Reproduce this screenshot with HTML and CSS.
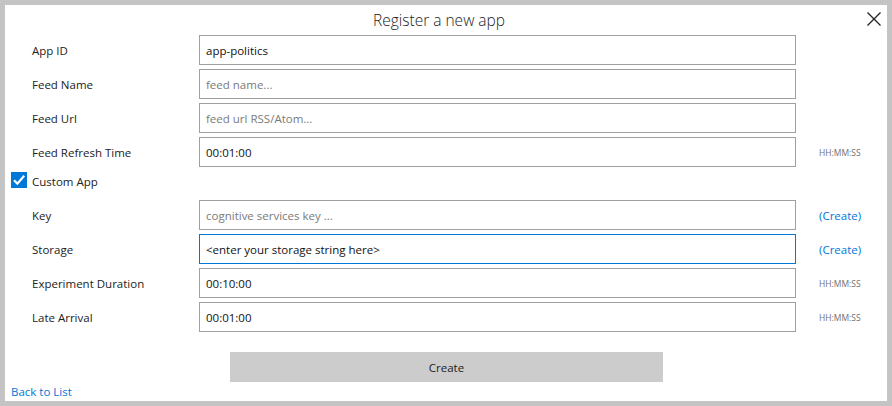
FILE: index.html
```html
<!DOCTYPE html>
<html>
<head>
<meta charset="utf-8">
<link rel="stylesheet" href="styles.css">
</head>
<body>
<div class="panel">
  <div class="title">Register a new app</div>
  <button class="close" aria-label="close">
    <svg width="14" height="14" viewBox="0 0 14 14"><path d="M0.5 0.5 L13.5 13.5 M13.5 0.5 L0.5 13.5" stroke="#222" stroke-width="1.3" fill="none"/></svg>
  </button>
  <div class="form">
    <div class="label">App ID</div>
    <div class="field">app-politics</div>
    <div class="note"></div>

    <div class="label">Feed Name</div>
    <div class="field ph">feed name...</div>
    <div class="note"></div>

    <div class="label">Feed Url</div>
    <div class="field ph">feed url RSS/Atom...</div>
    <div class="note"></div>

    <div class="label">Feed Refresh Time</div>
    <div class="field">00:01:00</div>
    <div class="note small">HH:MM:SS</div>

    <div class="check-row">
      <span class="checkbox"><svg width="16" height="16" viewBox="0 0 16 16"><path d="M3 8.2 L6.4 11.6 L13.2 3.8" stroke="#fff" stroke-width="2.2" fill="none"/></svg></span>
      <span class="check-label">Custom App</span>
    </div>

    <div class="label">Key</div>
    <div class="field ph">cognitive services key ...</div>
    <div class="note link">(Create)</div>

    <div class="label">Storage</div>
    <div class="field focus">&lt;enter your storage string here&gt;</div>
    <div class="note link">(Create)</div>

    <div class="label">Experiment Duration</div>
    <div class="field">00:10:00</div>
    <div class="note small">HH:MM:SS</div>

    <div class="label">Late Arrival</div>
    <div class="field">00:01:00</div>
    <div class="note small">HH:MM:SS</div>
  </div>
  <div class="actions">
    <button class="create">Create</button>
  </div>
  <a class="back">Back to List</a>
</div>
</body>
</html>
```
FILE: styles.css
```css
html, body {
  margin: 0;
  padding: 0;
}
body {
  background: #c4c4c4;
  width: 892px;
  height: 406px;
  box-sizing: border-box;
  padding: 5px 5px 5px 5px;
  font-family: "Open Sans", "Noto Sans", sans-serif;
  color: #222;
}
.panel {
  position: relative;
  background: #fff;
  width: 882px;
  height: 396px;
  box-sizing: border-box;
  padding: 0 0 0 6px;
  display: flex;
  flex-direction: column;
}
.title {
  height: 30px;
  line-height: 30px;
  text-align: center;
  font-size: 15.5px;
  font-weight: 300;
  color: #222;
  padding-right: 20px;
}
.close {
  position: absolute;
  top: 7px;
  right: 6px;
  width: 14px;
  height: 14px;
  padding: 0;
  border: 0;
  background: none;
  display: flex;
}
.form {
  display: grid;
  grid-template-columns: 188px 597px 91px;
  grid-template-rows: repeat(4, 30px) 25px repeat(4, 30px);
  row-gap: 4px;
  font-size: 11.5px;
}
.label {
  padding-left: 21px;
  display: flex;
  align-items: center;
}
.field {
  border: 1px solid #a0a0a0;
  box-sizing: border-box;
  display: flex;
  align-items: center;
  padding-left: 6px;
  color: #111;
}
.field.ph {
  color: #7a7a7a;
}
.field.focus {
  border-color: #0078d7;
}
.note {
  padding-left: 23px;
  display: flex;
  align-items: center;
}
.note.small {
  font-size: 8.5px;
  color: #707070;
}
.note.link {
  color: #0078d7;
  font-size: 11.5px;
}
.check-row {
  grid-column: 1 / -1;
  display: flex;
  align-items: flex-start;
  gap: 5px;
}
.checkbox {
  margin-top: 1px;
  width: 16px;
  height: 16px;
  background: #0078d7;
  display: flex;
}
.check-label {
  line-height: 22px;
}
.actions {
  display: flex;
  padding-left: 219px;
  margin-top: 20px;
}
.create {
  width: 433px;
  height: 30px;
  border: 0;
  background: #cccccc;
  font-family: inherit;
  font-size: 11.5px;
  color: #222;
  padding: 0;
}
.back {
  margin-top: 1px;
  color: #0078d7;
  font-size: 11.5px;
  line-height: 18px;
}
```
